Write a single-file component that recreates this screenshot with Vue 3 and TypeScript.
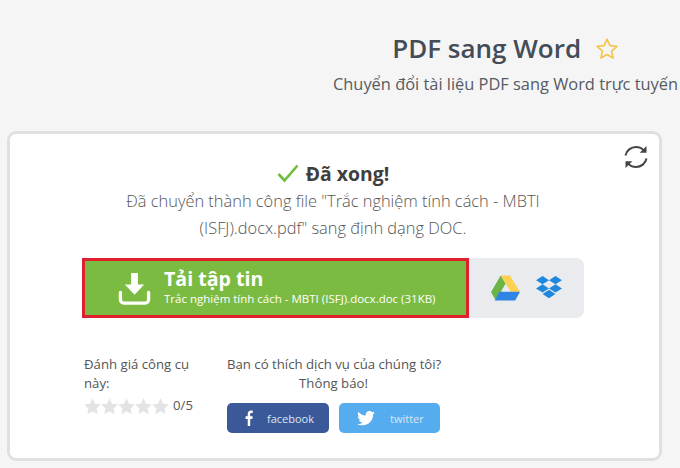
<template>
  <div class="page">
    <header class="head">
      <h1 class="title">
        PDF sang Word
        <svg class="fav" width="24" height="24" viewBox="0 0 24 24">
          <path d="M12 2.2l2.9 6.5 7 .7-5.3 4.7 1.5 6.9-6.1-3.6-6.1 3.6 1.5-6.9-5.3-4.7 7-.7z" fill="none" stroke="#f3c650" stroke-width="1.7" stroke-linejoin="round" />
        </svg>
      </h1>
      <p class="sub">Chuyển đổi tài liệu PDF sang Word trực tuyến</p>
    </header>

    <section class="card">
      <svg class="refresh" width="26" height="26" viewBox="0 0 26 26" fill="none" stroke="#444" stroke-width="2">
        <path d="M2.500 11.500C3.500 6.500 7.800 3 13 3c3.200 0 6 1.300 8 3.600" />
        <path d="M23.500 14.500C22.500 19.500 18.200 23 13 23c-3.200 0-6-1.300-8-3.600" />
        <path d="M23.500 2v6.800h-6.800z" fill="#444" stroke="none" />
        <path d="M2.500 24v-6.800h6.800z" fill="#444" stroke="none" />
      </svg>

      <div class="done">
        <svg width="22" height="19" viewBox="0 0 22 19">
          <path d="M1.500 10l6 6.500L20.500 1.500" fill="none" stroke="#6fbe3c" stroke-width="2.600" />
        </svg>
        <strong>Đã xong!</strong>
      </div>
      <p class="msg">
        Đã chuyển thành công file "Trắc nghiệm tính cách - MBTI<br />
        (ISFJ).docx.pdf" sang định dạng DOC.
      </p>

      <div class="actions">
        <a class="download">
          <svg width="33" height="33" viewBox="0 0 34 34" fill="#fff">
            <path d="M13.500 1h7v12h6.500L17 23.500 7 13h6.500z" />
            <path d="M2.500 21v7.500c0 2 1.500 3.500 3.500 3.500h22c2 0 3.500-1.500 3.500-3.500V21" fill="none" stroke="#fff" stroke-width="3.400" stroke-linecap="round" />
          </svg>
          <span class="dl-text">
            <b>Tải tập tin</b>
            <small>Trắc nghiệm tính cách - MBTI (ISFJ).docx.doc (31KB)</small>
          </span>
        </a>
        <div class="clouds">
          <svg width="29" height="26" viewBox="0 0 30 26">
            <path d="M10 0h9.500L30 17h-9.500z" fill="#fdd04f" />
            <path d="M10 0l5 8.500L5 26 0 17.500z" fill="#6cb544" />
            <path d="M8.500 17H30l-5 9H4z" fill="#2f84e4" />
          </svg>
          <svg width="26" height="24" viewBox="0 0 28 26" fill="#1f87dd">
            <path d="M7 0l7 4.500L7 9 0 4.500z" />
            <path d="M21 0l7 4.500L21 9l-7-4.500z" />
            <path d="M0 13.500L7 9l7 4.500L7 18z" />
            <path d="M28 13.500L21 9l-7 4.500L21 18z" />
            <path d="M7 19.500l7-4.500 7 4.500-7 4.500z" />
          </svg>
        </div>
      </div>

      <div class="foot">
        <div class="rate">
          <p>Đánh giá công cụ này:</p>
          <div class="stars">
            <svg v-for="n in 5" :key="n" width="17" height="16" viewBox="0 0 24 23">
              <path d="M12 0.500l3.600 7.600 8.400 1.100-6.200 5.800 1.600 8.300L12 19.200l-7.400 4.100 1.600-8.300L0 9.200l8.400-1.100z" fill="#e3e3e3" />
            </svg>
            <span>0/5</span>
          </div>
        </div>
        <div class="share">
          <p>Bạn có thích dịch vụ của chúng tôi?<br />Thông báo!</p>
          <div class="btns">
            <a class="soc fb">
              <svg width="8" height="16" viewBox="0 0 10 18" preserveAspectRatio="none">
                <path d="M6.500 18V10h2.700l.4-3.100H6.500V4.900c0-.9.300-1.500 1.600-1.500h1.600V.6C9.400.5 8.500.5 7.400.5 5 .5 3.400 1.900 3.400 4.500v2.400H.7V10h2.700v8z" fill="#fff" />
              </svg>
              <span>facebook</span>
            </a>
            <a class="soc tw">
              <svg width="18" height="15" viewBox="0 0 24 20">
                <path d="M24 2.400c-.9.400-1.800.7-2.800.8 1-.6 1.800-1.600 2.200-2.700-1 .6-2 1-3.100 1.200C19.300.7 18 0 16.600 0c-2.700 0-4.900 2.200-4.900 4.900 0 .4 0 .8.100 1.100C7.700 5.800 4.100 3.900 1.700.9c-.4.700-.7 1.600-.7 2.500 0 1.700.9 3.200 2.200 4.100-.8 0-1.600-.2-2.200-.6v.1c0 2.400 1.700 4.400 3.900 4.800-.4.100-.8.200-1.300.2-.3 0-.6 0-.9-.1.600 2 2.400 3.400 4.600 3.400-1.700 1.300-3.800 2.100-6.100 2.100-.4 0-.8 0-1.200-.1C2.200 18.200 4.800 19 7.500 19c9.100 0 14-7.500 14-14v-.6c1-.7 1.800-1.500 2.500-2z" fill="#fff" />
              </svg>
              <span>twitter</span>
            </a>
          </div>
        </div>
      </div>
    </section>
  </div>
</template>

<script setup lang="ts">
</script>

<style>
html,
body {
  margin: 0;
  background: #f5f5f5;
}
</style>

<style scoped>
.page {
  width: 680px;
  height: 468px;
  overflow: hidden;
  box-sizing: border-box;
  padding: 29px 0 0 7px;
  background: #f5f5f5;
  font-family: "Open Sans", "Noto Sans", sans-serif;
  color: #555;
}

.head {
  margin-left: 326px;
  width: 345px;
  height: 102px;
  display: flex;
  flex-direction: column;
  align-items: center;
}

.title {
  margin: 0;
  font-size: 26px;
  line-height: 38px;
  font-weight: 600;
  color: #444c57;
  white-space: nowrap;
}

.fav {
  vertical-align: -3px;
  margin-left: 7px;
}

.sub {
  margin: 5px 0 0;
  font-size: 16.400px;
  line-height: 24px;
  color: #555b64;
  white-space: nowrap;
}

.card {
  position: relative;
  width: 655px;
  height: 330px;
  box-sizing: border-box;
  border: 3px solid #e0e0e0;
  border-radius: 9px;
  background: #fff;
  padding: 25px 3px 0 0;
  display: flex;
  flex-direction: column;
  align-items: center;
}

.refresh {
  position: absolute;
  top: 10px;
  right: 10px;
}

.done {
  display: flex;
  align-items: center;
  gap: 7px;
  height: 28px;
  font-size: 19.400px;
  color: #3f3f3f;
}

.msg {
  margin: 0;
  font-size: 16.400px;
  font-weight: 300;
  line-height: 27px;
  text-align: center;
  color: #555;
  white-space: nowrap;
}

.actions {
  margin-top: 17px;
  width: 502px;
  height: 60px;
  display: flex;
  background: #e9ebee;
  border-radius: 8px;
}

.download {
  width: 387px;
  box-sizing: border-box;
  border: 3px solid #e0202c;
  background: #7cbb42;
  color: #fff;
  display: flex;
  align-items: center;
  padding-left: 33px;
  gap: 13px;
}

.dl-text {
  display: flex;
  flex-direction: column;
  margin-bottom: 4px;
}

.dl-text b {
  font-size: 19.600px;
  line-height: 24px;
}

.dl-text small {
  font-size: 11.500px;
  line-height: 15px;
  white-space: nowrap;
}

.clouds {
  flex: 1;
  display: flex;
  align-items: center;
  padding-left: 22px;
  gap: 16px;
}

.foot {
  margin-top: 37px;
  margin-left: 2px;
  width: 500px;
  display: flex;
  font-size: 13.200px;
  line-height: 19px;
  color: #555;
}

.rate {
  width: 143px;
}

.rate p {
  margin: 0;
  width: 125px;
}

.stars {
  margin-top: 3px;
  margin-bottom: 1px;
  display: flex;
  align-items: center;
}

.stars span {
  margin-left: 4px;
}

.share {
  width: 213px;
  text-align: center;
}

.share p {
  margin: 0;
  white-space: nowrap;
}

.btns {
  margin-top: 10px;
  display: flex;
  justify-content: space-between;
}

.soc {
  height: 30px;
  border-radius: 5px;
  display: flex;
  align-items: center;
  color: #dde7f5;
  font-size: 11px;
}

.fb {
  width: 102px;
  background: #3b5998;
  padding-left: 18px;
  box-sizing: border-box;
  gap: 14px;
}

.tw {
  width: 101px;
  background: #55acee;
  padding-left: 18px;
  box-sizing: border-box;
  gap: 15px;
}
</style>
